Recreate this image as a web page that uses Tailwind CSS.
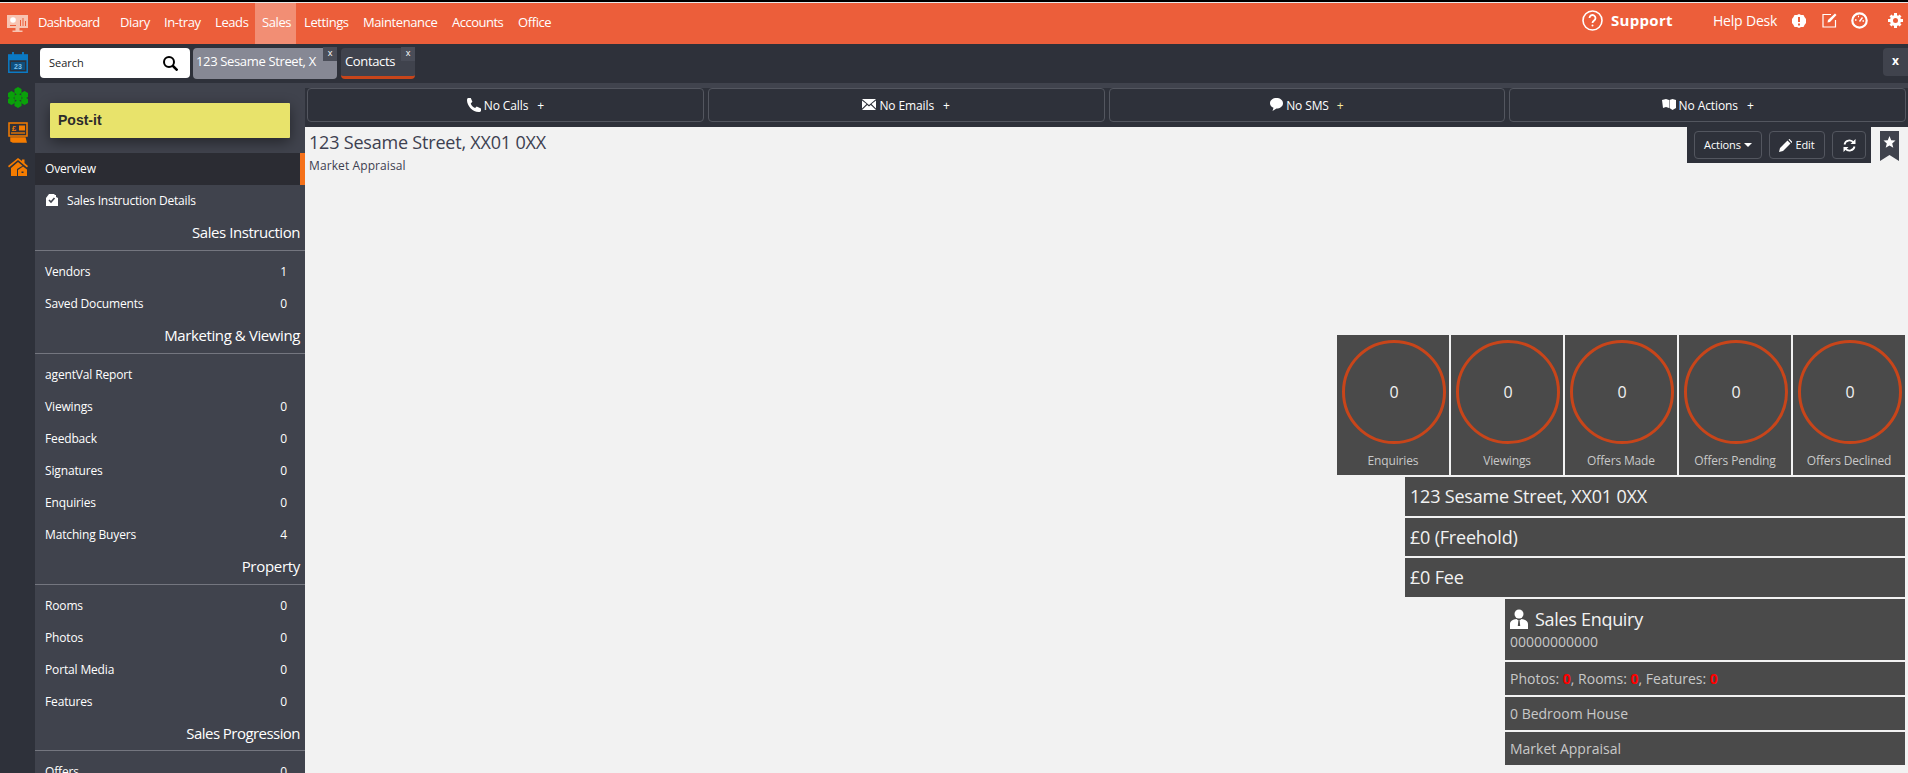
<!DOCTYPE html>
<html lang="en">
<head>
<meta charset="UTF-8">
<title>Sales Instruction</title>
<script src="https://cdn.jsdelivr.net/npm/@tailwindcss/browser@4"></script>
</head>
<body class="h-[773px] overflow-hidden bg-[#f2f2f2] font-['Open_Sans',sans-serif] text-white">
  <div class="h-[2px] bg-black"></div>
  <div class="h-px bg-[#e8e8e8]"></div>

  <!-- Header -->
  <header class="h-[41px] bg-[#ec5e3a] flex items-start text-[13px] tracking-[-0.4px]">
    <svg class="ml-[7px] mt-[12px] w-[21px] h-[17px]" viewBox="0 0 21 17" fill="#f7c4b2"><path d="M0 0h21v13H0z"/><path d="M8.500 13h4v2.500h3V17h-10v-1.500h3z"/><circle cx="6" cy="5" r="2.800" fill="#fff"/><path d="M3 10h6v1H3zM13 5h1v6h-1zM15.500 3h1v8h-1zM18 6h1v5h-1z" fill="#ec5e3a"/></svg>
    <nav class="ml-[10px] flex h-full">
      <a class="w-[82px] leading-[39px] tracking-[-0.6px]">Dashboard</a>
      <a class="w-[44px] leading-[39px]">Diary</a>
      <a class="w-[51px] leading-[39px]">In-tray</a>
      <a class="w-[40px] leading-[39px]">Leads</a>
      <a class="w-[41px] pl-[7px] leading-[39px] bg-[#f28e74]">Sales</a>
      <a class="ml-[8px] w-[59px] leading-[39px]">Lettings</a>
      <a class="w-[89px] leading-[39px]">Maintenance</a>
      <a class="w-[66px] leading-[39px] tracking-[-0.5px]">Accounts</a>
      <a class="leading-[39px]">Office</a>
    </nav>
    <div class="ml-auto flex items-center h-[35px]">
      <svg class="w-[21px] h-[21px]" viewBox="0 0 21 21" fill="none" stroke="#fff" stroke-width="1.600"><circle cx="10.500" cy="10.500" r="9.500"/><path d="M7.500 8a3 3 0 1 1 4.500 2.600c-1 .6-1.500 1-1.500 2.400" stroke-width="1.800"/><circle cx="10.500" cy="15.500" r="1" fill="#fff" stroke="none"/></svg>
      <span class="ml-[8px] w-[102px] text-[15px] font-bold tracking-[0.3px]">Support</span>
      <span class="w-[79px] text-[14px] tracking-[-0.2px]">Help Desk</span>
      <svg class="w-[14px] h-[14px]" viewBox="0 0 14 14" fill="#fff"><path d="M7 0l2 1 2.500 0 1 2L14 5v4l-1.500 2-1 2H9l-2 1-2-1H2.500l-1-2L0 9V5l1.500-2 1-2H5z"/><path d="M6 3h2v5H6zM6 9.500h2v2H6z" fill="#ec5e3a"/></svg>
      <svg class="ml-[16px] w-[15px] h-[15px]" viewBox="0 0 15 15" fill="none" stroke="#fff" stroke-width="1.200"><path d="M9 1.500H1v12.500h12.500V7"/><path d="M5.500 9.500l.5-2.500 7-6.500 1.500 1.500-6.500 7z" fill="#fff" stroke="none"/></svg>
      <svg class="ml-[14px] w-[17px] h-[17px]" viewBox="0 0 17 17" fill="none" stroke="#fff"><circle cx="8.500" cy="8.500" r="7.200" stroke-width="2.200"/><path d="M8.500 9.500l3-4M4 8h1.500M7 4.500h1M11.500 9h1.500" stroke-width="1.400"/></svg>
      <svg class="ml-[20px] mr-[5px] w-[15px] h-[15px]" viewBox="0 0 15 15"><circle cx="7.500" cy="7.500" r="4" fill="none" stroke="#fff" stroke-width="3"/><path d="M6 0h3v3H6zM6 12h3v3H6zM0 6h3v3H0zM12 6h3v3h-3zM1.500 3.500l2-2 2 2-2 2zM9.500 3.500l2-2 2 2-2 2zM1.500 11.500l2-2 2 2-2 2zM9.500 11.500l2-2 2 2-2 2z" fill="#fff"/></svg>
    </div>
  </header>

  <div class="flex h-[729px]">
    <!-- Rail -->
    <aside class="w-[35px] shrink-0 bg-[#2e313a] flex flex-col items-center pt-[8px]">
      <svg class="w-[20px] h-[21px]" viewBox="0 0 20 21" fill="none" stroke="#0b7ac4" stroke-width="1.500"><path d="M.800 3.500h18.400v16.700H.800z"/><path d="M.800 3h18.400v4.500H.800z" fill="#0b7ac4"/><path d="M5 0v5M15 0v5" stroke-width="2"/><rect x="3" y="10" width="14" height="8" fill="#0e4f7d" stroke="none"/><text x="10" y="16.500" text-anchor="middle" font-size="7" font-family="Liberation Sans" font-weight="700" fill="#7fc0ea" stroke="none">23</text></svg>
      <svg class="mt-[14px] w-[20px] h-[21px]" viewBox="0 0 20 21" fill="#0aa10a"><path d="M10 0l3.500 2v4L10 8 6.500 6V2z"/><path d="M10 6.500l3.500 2v4l-3.500 2-3.500-2v-4z"/><path d="M10 13l3.500 2v4L10 21l-3.500-2v-4z"/><path d="M3.500 4l3.300 2v4l-3.300 2L0 10V6z"/><path d="M3.500 10l3.300 2v4l-3.300 2L0 16v-4z"/><path d="M16.500 4l3.500 2v4l-3.500 2-3.300-2V6z"/><path d="M16.500 10l3.500 2v4l-3.500 2-3.300-2v-4z"/></svg>
      <svg class="mt-[14px] w-[20px] h-[21px]" viewBox="0 0 20 21" fill="none" stroke="#f57c00" stroke-width="1.500"><path d="M1 1h18v13H1z"/><path d="M3 16h14l1 4H5l-2-1z" fill="#f57c00"/><path d="M11 3.500h6v5h-6z" fill="#f57c00" stroke="none"/><text x="6" y="9" text-anchor="middle" font-size="8" font-family="Liberation Sans" font-weight="700" fill="#f57c00" stroke="none">£</text><path d="M3 11h14" stroke-width="1.300"/></svg>
      <svg class="mt-[15px] w-[20px] h-[18px]" viewBox="0 0 20 18" fill="#f57c00"><path d="M10 0l4 3V1.500h2.500V5L20 8l-1 1.500-9-7.500-9 7.500L0 8z"/><path d="M3 10l7-6 4.500 3.800L9 11v7H3z"/><path d="M10 12l5-3.500 4 3V18h-9z"/><path d="M13.500 13.500h2V15h-2z" fill="#2e313a"/></svg>
    </aside>

    <div class="flex-1 min-w-0 flex flex-col">
      <!-- Tabs -->
      <div class="h-[39px] shrink-0 bg-[#2e313a] flex items-start pt-[4px] pl-[5px]">
        <div class="w-[150px] h-[30px] bg-white rounded-[4px] flex items-center pl-[9px] pr-[12px] text-[11px] text-[#222]">
          Search
          <svg class="ml-auto w-[15px] h-[15px]" viewBox="0 0 15 15" fill="none" stroke="#000" stroke-width="2"><circle cx="6" cy="6" r="5"/><path d="M9.500 9.500l5 5" stroke-width="2.500"/></svg>
        </div>
        <div class="relative ml-[3px] w-[144px] h-[31px] bg-[#868894] rounded-[4px] pl-[3px] text-[13px] leading-[27px] tracking-[-0.35px]">
          123 Sesame Street, X
          <span class="absolute right-0 -top-px w-[14px] h-[14px] bg-[#4a4d58] text-[9px] leading-[12px] text-center">x</span>
        </div>
        <div class="relative ml-[4px] w-[74px] h-[31px] bg-[#40434d] rounded-[4px] border-b-[3px] border-[#c8451a] pl-[4px] text-[13px] leading-[27px] tracking-[-0.35px]">
          Contacts
          <span class="absolute right-0 -top-px w-[14px] h-[14px] bg-[#4a4d58] text-[9px] leading-[12px] text-center">x</span>
        </div>
        <div class="ml-auto w-[25px] h-[28px] bg-[#40434d] rounded-l-[4px] text-[12px] font-bold leading-[26px] text-center">x</div>
      </div>
      <div class="h-[5px] shrink-0 bg-[#40434d]"></div>

      <div class="flex-1 flex min-h-0">
        <!-- Sidebar -->
        <aside class="w-[270px] shrink-0 bg-[#40434d] text-[12px] tracking-[-0.15px] overflow-hidden">
          <div class="h-[65px] pt-[15px] pl-[15px]">
            <div class="w-[240px] h-[35px] bg-[#e8e36b] rounded-[1px] shadow-[0_4px_14px_rgba(0,0,0,0.45)] pl-[8px] font-['Liberation_Sans',sans-serif] text-[14px] font-bold tracking-normal leading-[35px] text-[#2b2b2b]">Post-it</div>
          </div>
          <div class="h-[32px] bg-[#2b2c33] border-r-[5px] border-[#f5711a] pl-[10px] leading-[32px]">Overview</div>
          <div class="h-[32px] pl-[10px] flex items-center">
            <svg class="w-[13px] h-[12px] -mt-[2px]" viewBox="0 0 13 12" fill="#fff"><path d="M1 4l3-4h5l1 1h1v2l2 1v8H1z"/><path d="M4 6l2 2 3.500-4" fill="none" stroke="#40434d" stroke-width="1.600"/></svg>
            <span class="ml-[9px] tracking-[-0.2px]">Sales Instruction Details</span>
          </div>
          <h3 class="h-[33px] mb-[5px] box-content border-b border-[#74767f] pr-[5px] text-right text-[15px] leading-[31px] tracking-[-0.45px]">Sales Instruction</h3>
          <div class="h-[32px] flex items-center pl-[10px] pr-[18px] justify-between"><span>Vendors</span><span>1</span></div>
          <div class="h-[32px] flex items-center pl-[10px] pr-[18px] justify-between"><span>Saved Documents</span><span>0</span></div>
          <h3 class="h-[33px] mb-[5px] box-content border-b border-[#74767f] pr-[5px] text-right text-[15px] leading-[31px] tracking-[-0.4px]">Marketing &amp; Viewing</h3>
          <div class="h-[32px] flex items-center pl-[10px] pr-[18px] justify-between"><span>agentVal Report</span></div>
          <div class="h-[32px] flex items-center pl-[10px] pr-[18px] justify-between"><span>Viewings</span><span>0</span></div>
          <div class="h-[32px] flex items-center pl-[10px] pr-[18px] justify-between"><span>Feedback</span><span>0</span></div>
          <div class="h-[32px] flex items-center pl-[10px] pr-[18px] justify-between"><span>Signatures</span><span>0</span></div>
          <div class="h-[32px] flex items-center pl-[10px] pr-[18px] justify-between"><span>Enquiries</span><span>0</span></div>
          <div class="h-[32px] flex items-center pl-[10px] pr-[18px] justify-between"><span>Matching Buyers</span><span>4</span></div>
          <h3 class="h-[33px] mb-[5px] box-content border-b border-[#74767f] pr-[5px] text-right text-[15px] leading-[31px] tracking-[-0.3px]">Property</h3>
          <div class="h-[32px] flex items-center pl-[10px] pr-[18px] justify-between"><span>Rooms</span><span>0</span></div>
          <div class="h-[32px] flex items-center pl-[10px] pr-[18px] justify-between"><span>Photos</span><span>0</span></div>
          <div class="h-[32px] flex items-center pl-[10px] pr-[18px] justify-between"><span>Portal Media</span><span>0</span></div>
          <div class="h-[32px] flex items-center pl-[10px] pr-[18px] justify-between"><span>Features</span><span>0</span></div>
          <h3 class="h-[32px] mb-[5px] box-content border-b border-[#74767f] pr-[5px] text-right text-[15px] leading-[31px] tracking-[-0.55px]">Sales Progression</h3>
          <div class="h-[32px] flex items-center pl-[10px] pr-[18px] justify-between"><span>Offers</span><span>0</span></div>
        </aside>

        <!-- Main -->
        <main class="flex-1 min-w-0">
          <div class="h-[39px] bg-[#2e313a] flex gap-[4px] pl-[2px] pr-[2px] text-[12px] tracking-[-0.1px]">
            <button class="flex-1 h-[34px] pt-[1px] border border-[#53565f] rounded-[4px] flex items-center justify-center gap-[3px]">
              <svg class="w-[14px] h-[14px] -mt-[2px]" viewBox="0 0 13 13" fill="#fff"><path d="M1 0L3.500 0 5 3.500 3.500 5c.5 1.800 2.200 3.500 4 4.200L9 8l4 1.800V12c-.5.800-1 1-2 1C5 13 0 7 0 2c0-1 .4-1.600 1-2z"/></svg>No Calls<span class="ml-[6px] text-[#fff]">+</span>
            </button>
            <button class="flex-1 h-[34px] pt-[1px] border border-[#53565f] rounded-[4px] flex items-center justify-center gap-[3px]">
              <svg class="w-[14px] h-[11px] -mt-[2px]" viewBox="0 0 14 11" fill="#fff"><path d="M0 0h14L7 6zM0 1.500L4.500 5 0 9.500zM14 1.500L9.500 5 14 9.500zM0 11l5.200-5L7 7.500 8.800 6 14 11z"/></svg>No Emails<span class="ml-[6px]">+</span>
            </button>
            <button class="flex-1 h-[34px] pt-[1px] border border-[#53565f] rounded-[4px] flex items-center justify-center gap-[3px]">
              <svg class="w-[13px] h-[13px] -mt-[2px]" viewBox="0 0 13 13" fill="#fff"><path d="M6.500 0C10 0 13 2 13 5.200S10 10.500 6.500 10.500L2.500 13l1-3.200C1.300 9 0 7.200 0 5.200 0 2 3 0 6.500 0z"/></svg>No SMS<span class="ml-[5px] text-[#f7e9a0]">+</span>
            </button>
            <button class="flex-1 h-[34px] pt-[1px] border border-[#53565f] rounded-[4px] flex items-center justify-center gap-[3px]">
              <svg class="w-[14px] h-[11px] -mt-[3px]" viewBox="0 0 14 11" fill="#fff"><path d="M0 1l4-1 3 1v8L4 8 1 9zM7.500 1l3-1 3.500 1v8l-3.500 2-3-2z"/></svg>No Actions<span class="ml-[6px]">+</span>
            </button>
          </div>

          <div class="flex justify-between">
            <div class="pl-[4px] pt-[1px] text-[#3d4050]">
              <div class="text-[18px] leading-[28px] tracking-[-0.2px]">123 Sesame Street, XX01 0XX</div>
              <div class="text-[12px] leading-[20px] tracking-[0.1px]">Market Appraisal</div>
            </div>
            <div class="flex items-start mr-[9px]">
              <div class="h-[36px] bg-[#2e313a] flex items-start gap-[7px] pl-[7px] pr-[5px] pt-[4px] text-[11px] tracking-[-0.1px]">
                <div class="w-[68px] h-[28px] border border-[#53565f] rounded-[4px] flex items-center justify-center gap-[3px]">Actions<span class="w-0 h-0 border-x-[4px] border-x-transparent border-t-[4px] border-t-white"></span></div>
                <div class="w-[56px] h-[28px] border border-[#53565f] rounded-[4px] flex items-center justify-center gap-[3px]">
                  <svg class="w-[13px] h-[13px]" viewBox="0 0 13 13" fill="#fff"><path d="M0 13l1-4 7.500-7.500 3 3L4 12zM9.500.500l1-.5 3 3-1 1z"/></svg>Edit
                </div>
                <div class="w-[34px] h-[28px] border border-[#53565f] rounded-[4px] flex items-center justify-center">
                  <svg class="w-[13px] h-[13px]" viewBox="0 0 13 13" fill="none" stroke="#fff" stroke-width="1.800"><path d="M1.500 5.500A5 5 0 0 1 10.500 3.500M11.500 7.500A5 5 0 0 1 2.500 9.500"/><path d="M12.500 0v5h-5zM.500 13V8h5z" fill="#fff" stroke="none"/></svg>
                </div>
              </div>
              <svg class="ml-[9px] mt-[4px] w-[19px] h-[30px]" viewBox="0 0 19 30"><path d="M0 0h19v30l-9.500-6L0 30z" fill="#40434d"/><path d="M9.500 5l1.700 4.200 4.300.300-3.300 2.900 1.100 4.400-3.800-2.400-3.800 2.400 1.100-4.400-3.300-2.900 4.300-.300z" fill="#fff"/></svg>
            </div>
          </div>

          <!-- Stats and summary -->
          <div class="mt-[159px] mr-[3px] flex flex-col items-end gap-[2px] text-[#f2f2f2]">
            <div class="flex gap-[2px]">
              <div class="w-[112px] h-[140px] bg-[#4a4a4a] flex flex-col items-center pt-[5px]">
                <div class="ml-[2px] w-[104px] h-[104px] rounded-full border-[3px] border-[#c8451a] flex items-center justify-center text-[16px] font-medium">0</div>
                <div class="mt-[8px] text-[12px] tracking-[-0.15px] text-[#c8c8c8]">Enquiries</div>
              </div>
              <div class="w-[112px] h-[140px] bg-[#4a4a4a] flex flex-col items-center pt-[5px]">
                <div class="ml-[2px] w-[104px] h-[104px] rounded-full border-[3px] border-[#c8451a] flex items-center justify-center text-[16px] font-medium">0</div>
                <div class="mt-[8px] text-[12px] tracking-[-0.15px] text-[#c8c8c8]">Viewings</div>
              </div>
              <div class="w-[112px] h-[140px] bg-[#4a4a4a] flex flex-col items-center pt-[5px]">
                <div class="ml-[2px] w-[104px] h-[104px] rounded-full border-[3px] border-[#c8451a] flex items-center justify-center text-[16px] font-medium">0</div>
                <div class="mt-[8px] text-[12px] tracking-[-0.15px] text-[#c8c8c8]">Offers Made</div>
              </div>
              <div class="w-[112px] h-[140px] bg-[#4a4a4a] flex flex-col items-center pt-[5px]">
                <div class="ml-[2px] w-[104px] h-[104px] rounded-full border-[3px] border-[#c8451a] flex items-center justify-center text-[16px] font-medium">0</div>
                <div class="mt-[8px] text-[12px] tracking-[-0.15px] text-[#c8c8c8]">Offers Pending</div>
              </div>
              <div class="w-[112px] h-[140px] bg-[#4a4a4a] flex flex-col items-center pt-[5px]">
                <div class="ml-[2px] w-[104px] h-[104px] rounded-full border-[3px] border-[#c8451a] flex items-center justify-center text-[16px] font-medium">0</div>
                <div class="mt-[8px] text-[12px] tracking-[-0.15px] text-[#c8c8c8]">Offers Declined</div>
              </div>
            </div>
            <div class="w-[500px] h-[39px] bg-[#4a4a4a] pl-[5px] text-[18px] leading-[39px] tracking-[-0.2px]">123 Sesame Street, XX01 0XX</div>
            <div class="w-[500px] h-[38px] bg-[#4a4a4a] pl-[5px] text-[18px] leading-[38px] tracking-[-0.2px]">£0 (Freehold)</div>
            <div class="w-[500px] h-[39px] bg-[#4a4a4a] pl-[5px] text-[18px] leading-[39px] tracking-[-0.2px]">£0 Fee</div>
            <div class="w-[400px] h-[61px] bg-[#4a4a4a] pl-[5px] pt-[7px]">
              <div class="flex items-center gap-[7px] text-[18px] leading-[26px] tracking-[-0.3px]">
                <svg class="w-[18px] h-[20px]" viewBox="0 0 18 20" fill="#fff"><circle cx="9" cy="5" r="4.500"/><path d="M0 20v-5c0-3 3-4.500 6.500-5L9 12l2.500-2c3.500.5 6.500 2 6.500 5v5z"/><path d="M8.300 12h1.400l.5 5H7.800z" fill="#4a4a4a"/></svg>Sales Enquiry
              </div>
              <div class="text-[14px] leading-[20px] text-[#c8c8c8]">00000000000</div>
            </div>
            <div class="w-[400px] h-[33px] bg-[#4a4a4a] pl-[5px] text-[14px] leading-[33px] text-[#c8c8c8]">Photos: <span class="text-[#f00] font-bold">0</span>, Rooms: <span class="text-[#f00] font-bold">0</span>, Features: <span class="text-[#f00] font-bold">0</span></div>
            <div class="w-[400px] h-[33px] bg-[#4a4a4a] pl-[5px] text-[14px] leading-[33px] text-[#c8c8c8]">0 Bedroom House</div>
            <div class="w-[400px] h-[33px] bg-[#4a4a4a] pl-[5px] text-[14px] leading-[33px] text-[#c8c8c8]">Market Appraisal</div>
          </div>
        </main>
      </div>
    </div>
  </div>
</body>
</html>
